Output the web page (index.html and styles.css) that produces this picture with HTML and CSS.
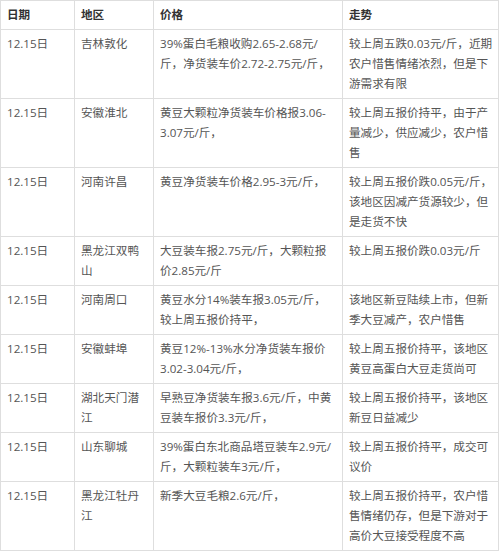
FILE: index.html
```html
<!DOCTYPE html>
<html lang="zh-CN">
<head>
<meta charset="utf-8">
<title>大豆价格</title>
<link rel="stylesheet" href="styles.css">
</head>
<body>
<table class="price-table">
  <colgroup>
    <col class="col-date">
    <col class="col-area">
    <col class="col-price">
    <col class="col-trend">
  </colgroup>
  <thead>
    <tr><th>日期</th><th>地区</th><th>价格</th><th class="trend">走势</th></tr>
  </thead>
  <tbody>
    <tr><td>12.15日</td><td>吉林敦化</td><td>39%蛋白毛粮收购2.65-2.68元/<br>斤，净货装车价2.72-2.75元/斤，</td><td class="trend">较上周五跌0.03元/斤，近期农户惜售情绪浓烈，但是下游需求有限</td></tr>
    <tr><td>12.15日</td><td>安徽淮北</td><td>黄豆大颗粒净货装车价格报3.06-<wbr>3.07元/斤，</td><td class="trend">较上周五报价持平，由于产量减少，供应减少，农户惜售</td></tr>
    <tr><td>12.15日</td><td>河南许昌</td><td>黄豆净货装车价格2.95-3元/斤，</td><td class="trend">较上周五报价跌0.05元/斤，该地区因减产货源较少，但是走货不快</td></tr>
    <tr><td>12.15日</td><td>黑龙江双鸭山</td><td>大豆装车报2.75元/斤，大颗粒报价2.85元/斤</td><td class="trend">较上周五报价跌0.03元/斤</td></tr>
    <tr><td>12.15日</td><td>河南周口</td><td>黄豆水分14%装车报3.05元/斤，较上周五报价持平，</td><td class="trend">该地区新豆陆续上市，但新季大豆减产，农户惜售</td></tr>
    <tr><td>12.15日</td><td>安徽蚌埠</td><td>黄豆12%-13%水分净货装车报价3.02-3.04元/斤，</td><td class="trend">较上周五报价持平，该地区黄豆高蛋白大豆走货尚可</td></tr>
    <tr><td>12.15日</td><td>湖北天门潜江</td><td>早熟豆净货装车报3.6元/斤，中黄豆装车报价3.3元/斤，</td><td class="trend">较上周五报价持平，该地区新豆日益减少</td></tr>
    <tr><td>12.15日</td><td>山东聊城</td><td>39%蛋白东北商品塔豆装车2.9元/斤，大颗粒装车3元/斤，</td><td class="trend">较上周五报价持平，成交可议价</td></tr>
    <tr><td>12.15日</td><td>黑龙江牡丹江</td><td>新季大豆毛粮2.6元/斤，</td><td class="trend">较上周五报价持平，农户惜售情绪仍存，但是下游对于高价大豆接受程度不高</td></tr>
  </tbody>
</table>
</body>
</html>
```

FILE: styles.css
```css
html, body {
  margin: 0;
  padding: 0;
  background: #fff;
}

.price-table {
  width: 498px;
  table-layout: fixed;
  border-collapse: collapse;
  font-family: "Open Sans", "Noto Sans CJK SC", sans-serif;
  font-size: 11.6px;
  line-height: 20px;
  color: #555;
}

.col-date { width: 74px; }
.col-area { width: 79px; }
.col-price { width: 189px; }
.col-trend { width: 156px; }

.price-table th,
.price-table td {
  border: 1px solid #dedede;
  padding: 4px 6px;
  text-align: left;
  vertical-align: top;
}

.price-table th {
  color: #333;
  font-weight: bold;
}

.price-table .trend {
  padding-right: 3px;
}
```
